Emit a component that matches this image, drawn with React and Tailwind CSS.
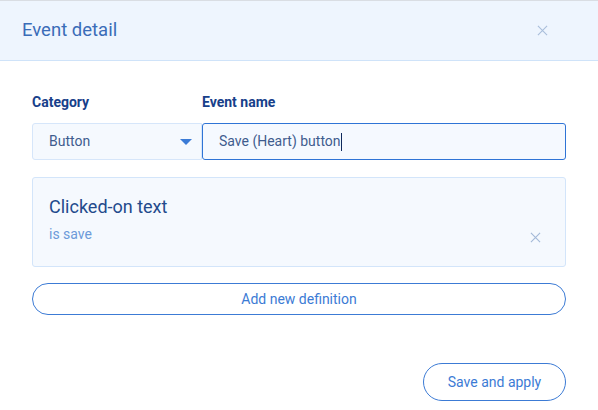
import React from 'react';

const font = { fontFamily: 'Roboto, "Liberation Sans", sans-serif' };

function CloseIcon({ className }) {
  return (
    <svg className={className} viewBox="0 0 12 12" fill="none" stroke="currentColor" strokeWidth="1.2">
      <path d="M1 1 L11 11 M11 1 L1 11" />
    </svg>
  );
}

export default function App() {
  return (
    <div className="w-[598px] h-[410px] bg-white flex flex-col" style={font}>
      <div className="h-[61px] bg-[#eef5fe] border-t border-t-[#d9dde3] border-b border-b-[#cfe3f9] flex items-center justify-between pl-[22px] pr-[50px]">
        <h1 className="text-[18.5px] text-[#3a6cb8] leading-none">Event detail</h1>
        <CloseIcon className="w-[11px] h-[11px] text-[#a9bedb]" />
      </div>

      <div className="px-8 pt-[33px] flex flex-col">
        <div className="flex">
          <div className="w-[170px] flex flex-col">
            <label className="text-[14px] font-bold text-[#17408a] leading-4 mb-[13px]">Category</label>
            <div className="h-[37px] bg-[#f5f9fe] border border-[#d6e6fa] rounded-l-[3px] flex items-center justify-between pl-4 pr-[9px]">
              <span className="text-[14px] text-[#3f5c8e]">Button</span>
              <svg className="w-3 h-[6px]" viewBox="0 0 12 6">
                <path d="M0 0 H12 L6 6 Z" fill="#3b7bd6" />
              </svg>
            </div>
          </div>
          <div className="flex-1 flex flex-col">
            <label className="text-[14px] font-bold text-[#17408a] leading-4 mb-[13px]">Event name</label>
            <div className="h-[37px] bg-[#f5f9ff] border-[1.5px] border-[#2f74d6] rounded-[3px] pl-4 flex items-center">
              <span className="text-[14px] text-[#3f5c8e]">Save (Heart) button</span>
              <span className="w-px h-[18px] bg-[#102a5c]" />
            </div>
          </div>
        </div>

        <div className="mt-[17px] h-[90px] bg-[#f5f9fe] border border-[#d3e5fa] rounded-[3px] pl-4 pr-6 pt-[19px] flex justify-between">
          <div className="flex flex-col">
            <span className="text-[18px] text-[#234a8c] leading-5">Clicked-on text</span>
            <span className="text-[14px] text-[#6c9ad9] mt-[9px] leading-4">is save</span>
          </div>
          <CloseIcon className="w-[11px] h-[11px] text-[#a3b9d8] mt-[35px]" />
        </div>

        <button className="mt-[16px] h-[32px] rounded-full border border-[#3c7bd5] text-[14px] text-[#3c7bd5] bg-white">
          Add new definition
        </button>

        <div className="flex justify-end mt-12">
          <button className="w-[143px] h-[38px] rounded-full border border-[#3c7bd5] text-[14px] text-[#3c7bd5] bg-white">
            Save and apply
          </button>
        </div>
      </div>
    </div>
  );
}
